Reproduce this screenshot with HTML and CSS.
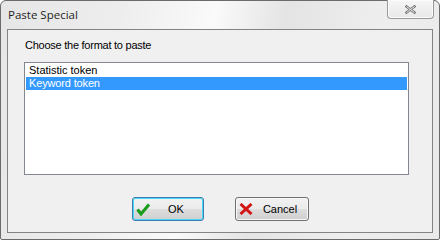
FILE: index.html
```html
<!DOCTYPE html>
<html>
<head>
<meta charset="utf-8">
<link rel="stylesheet" href="styles.css">
</head>
<body>
<div class="window">
  <div class="titlebar">
    <span class="title">Paste Special</span>
    <div class="close">
      <svg width="11" height="9" viewBox="0 0 11 9">
        <path d="M1.5 1.5 L9.5 7.5 M9.5 1.5 L1.5 7.5" stroke="#7a7a7a" stroke-width="2.6" stroke-linecap="square" fill="none"/>
        <path d="M1.5 1.5 L9.5 7.5 M9.5 1.5 L1.5 7.5" stroke="#f2f2f2" stroke-width="0.9" fill="none"/>
      </svg>
    </div>
  </div>
  <div class="client">
    <div class="label">Choose the format to paste</div>
    <div class="listbox">
      <div class="item">Statistic token</div>
      <div class="item selected">Keyword token</div>
    </div>
    <div class="buttons">
      <div class="btn default">
        <svg class="ico" width="14" height="13" viewBox="0 0 14 13">
          <path d="M1.5 6.5 L5 11 L13 1.5" stroke="#1a9b1a" stroke-width="3" fill="none" stroke-linejoin="miter"/>
        </svg>
        <span class="btext">OK</span>
      </div>
      <div class="btn">
        <svg class="ico" width="14" height="12" viewBox="0 0 14 12">
          <path d="M1.5 1 L12.5 11 M12.5 1 L1.5 11" stroke="#d31515" stroke-width="3" fill="none"/>
        </svg>
        <span class="btext">Cancel</span>
      </div>
    </div>
  </div>
</div>
</body>
</html>
```
FILE: styles.css
```css
html, body {
  margin: 0;
  padding: 0;
  background: #ffffff;
}
body {
  width: 440px;
  height: 241px;
  overflow: hidden;
}
.window {
  width: 440px;
  height: 240px;
  box-sizing: border-box;
  border: 1px solid #6b6b6b;
  border-radius: 6px 6px 2px 2px;
  background: linear-gradient(100deg, #e6e6e6 0%, #ededed 25%, #fafafa 45%, #e4e4e4 60%, #eeeeee 80%, #e9e9e9 100%);
  display: flex;
  flex-direction: column;
  font-family: "Liberation Sans", Arial, sans-serif;
}
.titlebar {
  height: 28px;
  display: flex;
  justify-content: space-between;
  align-items: flex-start;
}
.title {
  font-family: "Open Sans", "Liberation Sans", sans-serif;
  font-size: 11.5px;
  color: #1e1e1e;
  padding-left: 7px;
  padding-top: 6px;
}
.close {
  width: 45px;
  height: 18px;
  margin-top: -1px;
  margin-right: 5px;
  border: 1px solid #9a9a9a;
  border-top: none;
  border-radius: 0 0 4px 4px;
  background: linear-gradient(#f6f6f6, #e8e8e8);
  display: flex;
  align-items: center;
  justify-content: center;
  box-shadow: inset 0 0 0 1px #fbfbfb;
}
.client {
  margin: 0 6px 6px 6px;
  flex: 1;
  border: 1px solid #838383;
  background: #f0f0f0;
  display: flex;
  flex-direction: column;
  font-size: 11px;
  color: #000;
}
.label {
  margin: 9px 0 0 17px;
  line-height: 13px;
  height: 13px;
  letter-spacing: -0.25px;
}
.listbox {
  margin: 10px 0 0 16px;
  width: 385px;
  height: 113px;
  box-sizing: border-box;
  border: 1px solid #828790;
  padding: 1px;
  background: #ffffff;
}
.item {
  height: 13px;
  line-height: 13px;
  padding-left: 3px;
}
.item.selected {
  background: #3399ff;
  color: #ffffff;
  letter-spacing: -0.15px;
}
.buttons {
  display: flex;
  margin: 22px 0 0 124px;
  gap: 31px;
}
.btn {
  width: 72px;
  height: 24px;
  box-sizing: border-box;
  border: 1px solid #707070;
  border-radius: 3px;
  background: linear-gradient(#f2f2f2 0%, #ebebeb 48%, #dddddd 52%, #cfcfcf 100%);
  box-shadow: inset 0 0 0 1px #f8f8f8;
  display: flex;
  align-items: center;
  padding-left: 3px;
}
.btn + .btn {
  width: 74px;
}
.btn.default {
  border-color: #3c7fb1;
  box-shadow: inset 0 0 0 1px #48d7fb;
}
.ico {
  flex: none;
}
.btext {
  flex: 1;
  text-align: center;
  font-size: 11px;
  padding-right: 1px;
}
```
